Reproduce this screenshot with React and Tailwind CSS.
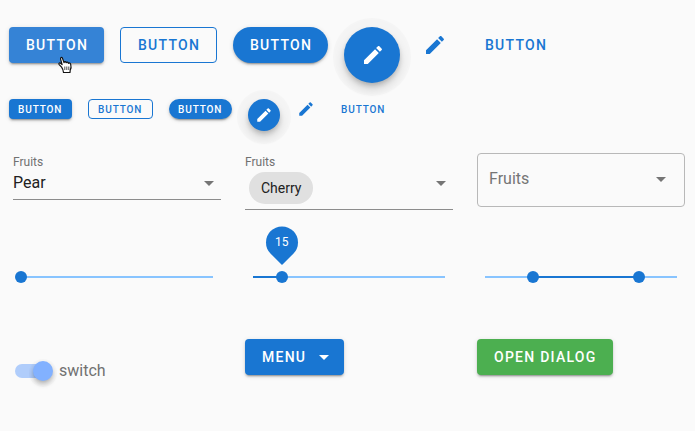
const ELEVATION_2 =
  "shadow-[0_3px_1px_-2px_rgba(0,0,0,.2),0_2px_2px_0_rgba(0,0,0,.14),0_1px_5px_0_rgba(0,0,0,.12)]";
const ELEVATION_6 =
  "shadow-[0_3px_5px_-1px_rgba(0,0,0,.2),0_6px_10px_0_rgba(0,0,0,.14),0_2px_1px_11px_rgba(0,0,0,.025)]";

const VARIANTS = {
  primary: `bg-[#1976d2] text-white rounded ${ELEVATION_2}`,
  hovered: `bg-[#3583d6] text-white rounded ${ELEVATION_2}`,
  outlined: "border border-[#1976d2] text-[#1976d2] rounded",
  rounded: `bg-[#1976d2] text-white rounded-full ${ELEVATION_2}`,
  success: `bg-[#4caf50] text-white rounded ${ELEVATION_2}`,
  text: "text-[#1976d2]",
};

function Button({ variant = "primary", small, className = "", children }) {
  const size = small ? "h-5 pl-[9px] pr-2 pt-px text-[10px]" : "h-9 pl-[17px] text-sm";
  return (
    <button
      className={`relative flex shrink-0 items-center whitespace-nowrap font-medium uppercase leading-none tracking-[.0893em] ${size} ${VARIANTS[variant]} ${className}`}
    >
      {children}
    </button>
  );
}

function Pencil({ className }) {
  return (
    <svg viewBox="0 0 24 24" fill="currentColor" className={className}>
      <path d="M20.71,7.04C21.1,6.65 21.1,6 20.71,5.63L18.37,3.29C18,2.9 17.35,2.9 16.96,3.29L15.12,5.12L18.87,8.87M3,17.25V21H6.75L17.81,9.93L14.06,6.18L3,17.25Z" />
    </svg>
  );
}

function MenuDown({ className = "" }) {
  return (
    <svg viewBox="0 0 24 24" fill="currentColor" className={`size-6 shrink-0 ${className}`}>
      <path d="M7,10L12,15L17,10H7Z" />
    </svg>
  );
}

function HandCursor() {
  return (
    <svg viewBox="0 0 16 18" className="absolute left-[48px] top-[29px] h-[18px] w-4">
      <path
        d="M4.6 11.2 2.2 8.6C1.2 7.4 2.6 6.5 3.6 7.3L5.1 8.6 3.6 3.1C3.2 1.3 4.9.8 5.5 2.4L7 6.6C7.2 5.4 8.8 5.4 9.2 6.7 9.6 5.8 11.1 6 11.4 7.3 12.2 6.6 13.5 7.1 13.7 8.3 14.4 10.8 14.3 12.3 13.2 14.2L13 16.5H6.5C6.3 14.5 5.7 12.8 4.6 11.2Z"
        fill="#fff"
        stroke="#111"
        strokeWidth="1.2"
        strokeLinejoin="round"
      />
      <path d="M7.8 10.5v3.5M9.8 10.5v3.5M11.8 10.5v3.5" stroke="#222" strokeWidth=".8" />
    </svg>
  );
}

function Slider({ from = 0, to, thumbs, label }) {
  return (
    <div className="relative mx-2 h-0.5 bg-[#88c4ff]">
      <div
        className="absolute h-full bg-[#1976d2]"
        style={{ left: `${from}%`, width: `${to - from}%` }}
      />
      {thumbs.map((v) => (
        <div
          key={v}
          className="absolute -top-[5px] size-3 -translate-x-1/2 rounded-full bg-[#1976d2]"
          style={{ left: `${v}%` }}
        />
      ))}
      {label && (
        <div
          className="absolute -top-[50px] flex size-8 -translate-x-1/2 items-center justify-center text-xs text-white"
          style={{ left: `${to}%` }}
        >
          <div className="absolute inset-0 translate-y-[0.4px] rotate-45 rounded-full rounded-br-none bg-[#1976d2]" />
          <span className="relative">{label}</span>
        </div>
      )}
    </div>
  );
}

export default function App() {
  return (
    <div className="h-[431px] w-[695px] overflow-hidden bg-[#fafafa] pt-[27px] font-[Roboto,sans-serif] text-[#212121]">
      <div className="flex h-[72px] items-start gap-4 pl-[9px]">
        <Button variant="hovered" className="w-[95px]">
          Button
          <HandCursor />
        </Button>
        <Button variant="outlined" className="w-[97px]">Button</Button>
        <Button variant="rounded" className="w-[95px]">Button</Button>
        <button className={`flex size-14 items-center justify-center rounded-full bg-[#1976d2] pl-px text-white ${ELEVATION_6}`}>
          <Pencil className="size-6" />
        </button>
        <button className="flex size-9 items-center justify-center pl-px text-[#1976d2]">
          <Pencil className="size-6" />
        </button>
        <Button variant="text" className="w-[97px]">Button</Button>
      </div>

      <div className="flex h-[54px] items-start gap-4 pl-[9px]">
        <Button small className="w-[63px]">Button</Button>
        <Button small variant="outlined" className="w-[65px]">Button</Button>
        <Button small variant="rounded" className="w-[63px]">Button</Button>
        <button className={`flex size-8 items-center justify-center rounded-full bg-[#1976d2] pr-px text-white ${ELEVATION_6}`}>
          <Pencil className="size-[18px]" />
        </button>
        <button className="flex size-5 items-center justify-center pr-px text-[#1976d2]">
          <Pencil className="size-[18px]" />
        </button>
        <Button small variant="text" className="w-[63px]">Button</Button>
      </div>

      <div className="grid h-[123px] grid-cols-[208px_208px_208px] items-start gap-6 pl-[13px]">
        <div className="flex h-[47px] flex-col border-b border-[#8c8c8c] pt-px">
          <span className="mb-px text-xs leading-4 text-[#717171]">Fruits</span>
          <div className="flex h-6 items-center justify-between">
            <span className="text-base leading-6">Pear</span>
            <MenuDown className="text-[#757575]" />
          </div>
        </div>
        <div className="flex h-[57px] flex-col border-b border-[#8c8c8c] pt-px">
          <span className="mb-px text-xs leading-4 text-[#717171]">Fruits</span>
          <div className="flex items-start justify-between pl-1">
            <span className="mt-px flex h-8 items-center rounded-full bg-[#e0e0e0] px-3 text-sm">Cherry</span>
            <MenuDown className="text-[#757575]" />
          </div>
        </div>
        <div className="flex h-[54px] items-center justify-between rounded border border-[#b8b8b8] px-[11px] text-[#757575]">
          <span className="-mt-0.5 text-base">Fruits</span>
          <MenuDown className="-mt-0.5" />
        </div>
      </div>

      <div className="grid h-[63px] grid-cols-[208px_208px_208px] items-start gap-6 pl-[13px]">
        <Slider to={0} thumbs={[0]} />
        <Slider to={15} thumbs={[15]} label="15" />
        <Slider from={25} to={80} thumbs={[25, 80]} />
      </div>

      <div className="grid grid-cols-[208px_208px_208px] items-start gap-6 pl-[13px]">
        <label className="flex items-center gap-1.5 pl-0.5 pt-5">
          <span className="flex h-6 w-[38px] items-center">
            <span className="h-3.5 w-[30px] rounded-full bg-[#b0cdfb]" />
            <span className="-ml-3 size-5 shrink-0 rounded-full bg-[#82b1ff] shadow-[0_2px_4px_-1px_rgba(0,0,0,.2),0_4px_5px_0_rgba(0,0,0,.14),0_2px_1px_4px_rgba(0,0,0,.025)]" />
          </span>
          <span className="text-base leading-6 text-[#717171]">switch</span>
        </label>
        <Button className="w-[99px] justify-between pr-2">
          Menu
          <MenuDown />
        </Button>
        <Button variant="success" className="w-[136px]">Open Dialog</Button>
      </div>
    </div>
  );
}
